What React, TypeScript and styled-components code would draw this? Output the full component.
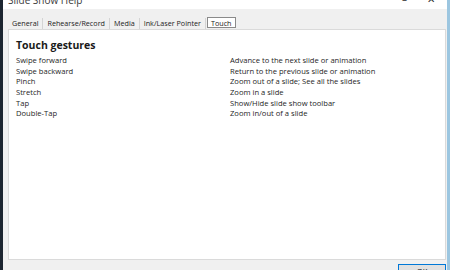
import * as React from 'react';
import styled, { createGlobalStyle } from 'styled-components';

const GlobalStyle = createGlobalStyle`
  html, body {
    margin: 0;
    padding: 0;
    background: #f0f0f0;
  }
`;

const Fenster = styled.div`
  width: 450px;
  height: 270px;
  box-sizing: border-box;
  overflow: hidden;
  display: flex;
  flex-flow: column nowrap;
  background: #f0f0f0;
  border-left: 3px solid #1c2530;
  border-right: 3px solid #9cc6e0;
  font-family: "Open Sans", "Noto Sans", sans-serif;
  color: #1a1a1a;
`;

const TittelLinje = styled.div`
  flex: 0 0 9px;
  background: #ffffff;
  display: flex;
  align-items: flex-end;
  justify-content: space-between;
  padding: 0 12px 0 5px;
  overflow: hidden;
`;

const Tittel = styled.span`
  font-size: 10px;
  line-height: 10px;
  margin-bottom: 4px;
  color: #3a3a3a;
`;

const Knapper = styled.div`
  display: flex;
  gap: 20px;
  font-size: 10px;
  line-height: 10px;
  margin-bottom: 5px;
  color: #333;
`;

const FaneRad = styled.div`
  display: flex;
  align-items: flex-end;
  margin-top: 8px;
  padding-left: 5px;
  height: 12px;
`;

const Fane = styled.div<{ $valgt?: boolean }>`
  font-size: 7.2px;
  line-height: 10px;
  padding: 0 4px;
  height: 11px;
  box-sizing: border-box;
  color: #222;
  border-right: 1px solid ${p => (p.$valgt ? '#8a8a8a' : '#d4d4d4')};
  ${p => p.$valgt && `
    background: #ffffff;
    border: 1px solid #8a8a8a;
    margin-left: 1px;
    margin-bottom: 1px;
    padding: 0 3px;
  `}
`;

const Panel = styled.section`
  flex: 1 1 auto;
  min-height: 0;
  margin: 0 1px 0 5px;
  background: #ffffff;
  border: 1px solid #dadada;
  padding: 8px 7px 0 7px;
`;

const Overskrift = styled.h2`
  margin: 0 0 3px 0;
  font-size: 10.5px;
  line-height: 14px;
  font-weight: 700;
  color: #1a1a1a;
`;

const Tabell = styled.div`
  display: grid;
  grid-template-columns: 214px 1fr;
  grid-auto-rows: 10.7px;
  font-size: 7.6px;
  line-height: 10.7px;
  color: #1e1e1e;
`;

const Bunn = styled.div`
  flex: 0 0 10px;
  height: 10px;
  min-height: 0;
  overflow: hidden;
  display: flex;
  justify-content: flex-end;
  align-items: flex-start;
  padding: 4px 1px 0 0;
  box-sizing: border-box;
`;

const OkKnapp = styled.button`
  flex: 0 0 auto;
  width: 48px;
  height: 14px;
  box-sizing: border-box;
  background: #e1e1e1;
  border: 1px solid #0078d7;
  font-family: inherit;
  font-size: 7.6px;
  line-height: 10px;
  padding: 0;
  color: #111;
`;

const faner = ['General', 'Rehearse/Record', 'Media', 'Ink/Laser Pointer', 'Touch'];

const gester: [string, string][] = [
  ['Swipe forward', 'Advance to the next slide or animation'],
  ['Swipe backward', 'Return to the previous slide or animation'],
  ['Pinch', 'Zoom out of a slide; See all the slides'],
  ['Stretch', 'Zoom in a slide'],
  ['Tap', 'Show/Hide slide show toolbar'],
  ['Double-Tap', 'Zoom in/out of a slide'],
];

export default function App() {
  return (
    <>
      <GlobalStyle />
      <Fenster>
        <TittelLinje>
          <Tittel>Slide Show Help</Tittel>
          <Knapper>
            <span>–</span>
            <span>✕</span>
          </Knapper>
        </TittelLinje>
        <FaneRad>
          {faner.map(navn => (
            <Fane key={navn} $valgt={navn === 'Touch'}>{navn}</Fane>
          ))}
        </FaneRad>
        <Panel>
          <Overskrift>Touch gestures</Overskrift>
          <Tabell>
            {gester.map(([gest, handling]) => (
              <React.Fragment key={gest}>
                <span>{gest}</span>
                <span>{handling}</span>
              </React.Fragment>
            ))}
          </Tabell>
        </Panel>
        <Bunn>
          <OkKnapp>OK</OkKnapp>
        </Bunn>
      </Fenster>
    </>
  );
}
